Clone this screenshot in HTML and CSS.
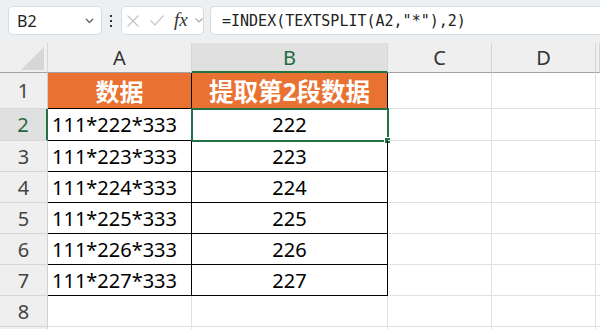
FILE: index.html
```html
<!DOCTYPE html>
<html lang="zh">
<head>
<meta charset="utf-8">
<link rel="stylesheet" href="styles.css">
</head>
<body>
<div class="toolbar">
  <div class="box namebox">
    <span class="ref">B2</span>
    <svg class="chev" width="9" height="6" viewBox="0 0 9 6"><path d="M1 1 L4.5 4.5 L8 1" fill="none" stroke="#555" stroke-width="1.2"/></svg>
  </div>
  <div class="dots"><i></i><i></i><i></i></div>
  <div class="box fxbox">
    <svg class="ic-x" width="12" height="12" viewBox="0 0 12 12"><path d="M0.5 0.5 L11.5 11.5 M11.5 0.5 L0.5 11.5" stroke="#c4c4c4" stroke-width="1.2" fill="none"/></svg>
    <svg class="ic-v" width="14" height="11" viewBox="0 0 14 11"><path d="M0.5 5.5 L5 10 L13.5 0.5" stroke="#c4c4c4" stroke-width="1.2" fill="none"/></svg>
    <span class="fx">fx</span>
    <svg class="chev" width="8" height="5" viewBox="0 0 8 5"><path d="M0.5 0.5 L4 4 L7.5 0.5" fill="none" stroke="#aaa" stroke-width="1.2"/></svg>
  </div>
  <div class="box formula">=INDEX(TEXTSPLIT(A2,"*"),2)</div>
</div>
<div class="sheet">
  <div class="ch corner"><span class="tri"></span></div>
  <div class="ch">A</div>
  <div class="ch sel">B</div>
  <div class="ch">C</div>
  <div class="ch">D</div>
  <div class="ch last"></div>

  <div class="rh">1</div>
  <div class="c t hd">数据</div>
  <div class="c t hd b">提取第2段数据</div>
  <div class="c"></div><div class="c"></div><div class="c last"></div>

  <div class="rh sel">2</div>
  <div class="c t">111*222*333</div>
  <div class="c t b num active">222<span class="selbox"></span><span class="handle"></span></div>
  <div class="c"></div><div class="c"></div><div class="c last"></div>

  <div class="rh">3</div>
  <div class="c t">111*223*333</div>
  <div class="c t b num">223</div>
  <div class="c"></div><div class="c"></div><div class="c last"></div>

  <div class="rh">4</div>
  <div class="c t">111*224*333</div>
  <div class="c t b num">224</div>
  <div class="c"></div><div class="c"></div><div class="c last"></div>

  <div class="rh">5</div>
  <div class="c t">111*225*333</div>
  <div class="c t b num">225</div>
  <div class="c"></div><div class="c"></div><div class="c last"></div>

  <div class="rh">6</div>
  <div class="c t">111*226*333</div>
  <div class="c t b num">226</div>
  <div class="c"></div><div class="c"></div><div class="c last"></div>

  <div class="rh">7</div>
  <div class="c t">111*227*333</div>
  <div class="c t b num">227</div>
  <div class="c"></div><div class="c"></div><div class="c last"></div>

  <div class="rh">8</div>
  <div class="c"></div><div class="c"></div><div class="c"></div><div class="c"></div><div class="c last"></div>

  <div class="rh"></div>
  <div class="c"></div><div class="c"></div><div class="c"></div><div class="c"></div><div class="c last"></div>
</div>
</body>
</html>
```
FILE: styles.css
```css
* { box-sizing: border-box; }
html, body { margin: 0; padding: 0; }
body {
  width: 600px;
  height: 329px;
  overflow: hidden;
  background: #fff;
  font-family: "Noto Sans", "Noto Sans CJK SC", sans-serif;
}
.toolbar {
  height: 43px;
  background: #edf0f3;
  display: flex;
  align-items: center;
  padding: 0 0 2px 8px;
  overflow: hidden;
}
.box {
  height: 29px;
  background: #fff;
  border: 1px solid #d9dce0;
  border-radius: 5px;
  display: flex;
  align-items: center;
}
.namebox {
  width: 101px;
  padding: 0 7px 0 8px;
  justify-content: space-between;
}
.ref { font-size: 16px; color: #222; }
.dots {
  width: 21px;
  display: flex;
  flex-direction: column;
  align-items: center;
  gap: 3px;
}
.dots i { display: block; width: 2px; height: 2px; background: #333; }
.fxbox {
  width: 84px;
  padding: 0 0 0 5px;
}
.ic-v { margin-left: 11px; }
.fx {
  font-family: "Liberation Serif", "DejaVu Serif", serif;
  font-style: italic;
  font-size: 19px;
  line-height: 1;
  color: #333;
  margin-left: 10px;
  margin-top: -2px;
  width: 16px;
}
.fxbox .chev { margin-left: 5px; }
.formula {
  margin-left: 6px;
  flex: 1;
  min-width: 390px;
  border-right: none;
  border-radius: 5px 0 0 5px;
  padding-left: 11px;
  font-family: "DejaVu Sans Mono", "Liberation Mono", monospace;
  font-size: 15px;
  color: #222;
}
.sheet {
  display: grid;
  grid-template-columns: 48px 144px 196px 104px 104px 1fr;
  grid-template-rows: 30px 36px 32px 31px 31px 31px 31px 31px 31px 10px;
}
.ch {
  background: #efefef;
  border-right: 1px solid #d6d6d6;
  border-bottom: 1px solid #a3a3a3;
  display: flex;
  align-items: center;
  justify-content: center;
  font-size: 20px;
  color: #333;
}
.ch.sel {
  background: #e0e0e0;
  color: #1d6b40;
  border-bottom: 2px solid #217346;
}
.corner {
  justify-content: flex-end;
  align-items: flex-end;
  padding: 0 3px 2px 0;
}
.tri {
  width: 23px;
  height: 23px;
  background: #d6d6d6;
  clip-path: polygon(100% 0, 100% 100%, 0 100%);
}
.rh {
  background: #efefef;
  border-right: 1px solid #d0d0d0;
  border-bottom: 1px solid #d6d6d6;
  display: flex;
  align-items: center;
  justify-content: center;
  font-size: 20px;
  color: #444;
}
.rh.sel {
  background: #e0e0e0;
  color: #1d6b40;
  border-right: 2px solid #217346;
}
.c {
  border-right: 1px solid #e0e0e0;
  border-bottom: 1px solid #e0e0e0;
  display: flex;
  align-items: center;
  padding-left: 4px;
  font-size: 20px;
  color: #000;
  position: relative;
}
.c.last { border-right: none; }
.c.t {
  border-right: 1px solid #000;
  border-bottom: 1px solid #000;
}
.c.hd {
  background: #e97132;
  color: #fff;
  font-weight: bold;
  font-size: 24px;
  justify-content: center;
  padding: 0;
}
.c.hd.b { font-size: 24.5px; }
.c.num { justify-content: center; padding: 0; }
.selbox {
  position: absolute;
  left: -1px;
  top: -1px;
  right: -2px;
  bottom: -2px;
  border: 2px solid #217346;
}
.handle {
  position: absolute;
  right: -4px;
  bottom: -4px;
  width: 7px;
  height: 7px;
  background: #217346;
  border: 1px solid #fff;
}
```
